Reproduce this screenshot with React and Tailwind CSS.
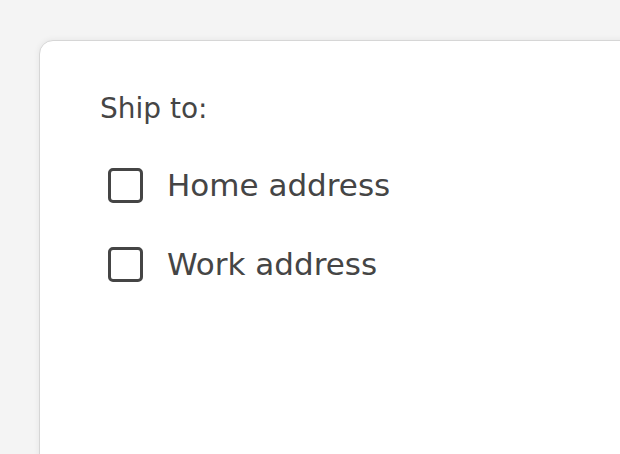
import React from 'react';

const options = [
  { id: 'home', label: 'Home address' },
  { id: 'work', label: 'Work address' },
];

export default function App() {
  return (
    <div className="w-[620px] h-[454px] overflow-hidden bg-[#f4f4f4] pl-[39px] pt-[40px]" style={{ fontFamily: '"DejaVu Sans", sans-serif' }}>
      <div className="w-[620px] h-[460px] bg-white rounded-[14px] border border-[#d6d6d6] shadow-[0_0_6px_rgba(0,0,0,0.07)] pl-[60px] pt-[52px] text-[#454545]">
        <div className="text-[28px] leading-[32px]">Ship to:</div>
        <div className="mt-[42px] flex flex-col gap-[43px]">
          {options.map(o => (
            <label key={o.id} className="flex items-center gap-[24px] pl-[8px] cursor-pointer">
              <span className="w-[35px] h-[35px] rounded-[5px] border-[3px] border-[#454545] shrink-0" />
              <span className="text-[31px] leading-[36px]">{o.label}</span>
            </label>
          ))}
        </div>
      </div>
    </div>
  );
}
